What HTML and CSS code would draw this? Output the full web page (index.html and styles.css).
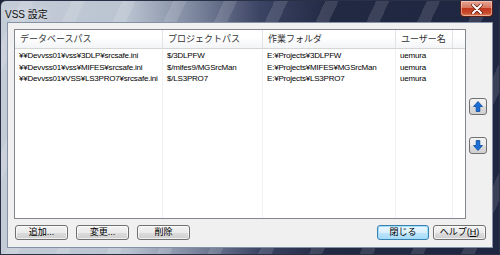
FILE: index.html
```html
<!DOCTYPE html>
<html lang="ja">
<head>
  <meta charset="UTF-8">
  <title>VSS 設定</title>
  <link rel="stylesheet" href="styles.css">
</head>
<body>
  <div class="window">
    <div class="titlebar">
      <span class="title">VSS 設定</span>
      <button class="close-btn" title="閉じる">
        <svg width="12" height="10" viewBox="0 0 12 10">
          <path d="M2 1 L10 9 M10 1 L2 9" stroke="#5a1a10" stroke-width="3.4" stroke-linecap="round"/>
          <path d="M2 1 L10 9 M10 1 L2 9" stroke="#fff" stroke-width="2" stroke-linecap="round"/>
        </svg>
      </button>
    </div>

    <div class="client">
      <div class="main">
        <div class="list">
          <div class="col c1">
            <div class="hd">データベースパス</div>
            <div class="cell">¥¥Devvss01¥vss¥3DLP¥srcsafe.ini</div>
            <div class="cell">¥¥Devvss01¥vss¥MIFES¥srcsafe.ini</div>
            <div class="cell">¥¥Devvss01¥VSS¥LS3PRO7¥srcsafe.ini</div>
          </div>
          <div class="col c2">
            <div class="hd">プロジェクトパス</div>
            <div class="cell">$/3DLPFW</div>
            <div class="cell">$/mifes9/MGSrcMan</div>
            <div class="cell">$/LS3PRO7</div>
          </div>
          <div class="col c3">
            <div class="hd">作業フォルダ</div>
            <div class="cell">E:¥Projects¥3DLPFW</div>
            <div class="cell">E:¥Projects¥MIFES¥MGSrcMan</div>
            <div class="cell">E:¥Projects¥LS3PRO7</div>
          </div>
          <div class="col c4">
            <div class="hd">ユーザー名</div>
            <div class="cell">uemura</div>
            <div class="cell">uemura</div>
            <div class="cell">uemura</div>
          </div>
          <div class="col c5">
            <div class="hd">&nbsp;</div>
          </div>
        </div>

        <div class="side">
          <button class="arrow-btn up" title="上へ">
            <svg width="10" height="11" viewBox="0 0 10 11">
              <path d="M5 0.5 L9.5 5.5 L6.8 5.5 L6.8 10.5 L3.2 10.5 L3.2 5.5 L0.5 5.5 Z" fill="#1b6fd6" stroke="#0d4a9e" stroke-width="0.8"/>
            </svg>
          </button>
          <button class="arrow-btn down" title="下へ">
            <svg width="10" height="11" viewBox="0 0 10 11">
              <path d="M5 10.5 L9.5 5.5 L6.8 5.5 L6.8 0.5 L3.2 0.5 L3.2 5.5 L0.5 5.5 Z" fill="#1b6fd6" stroke="#0d4a9e" stroke-width="0.8"/>
            </svg>
          </button>
        </div>
      </div>

      <div class="bottom">
        <div class="group">
          <button class="btn">追加...</button>
          <button class="btn">変更...</button>
          <button class="btn">削除</button>
        </div>
        <div class="group right">
          <button class="btn default">閉じる</button>
          <button class="btn">ヘルプ(<u>H</u>)</button>
        </div>
      </div>
    </div>
  </div>
</body>
</html>
```

FILE: styles.css
```css
body { margin: 0; background: #1c2238; font-family: "Liberation Sans", "Noto Sans CJK JP", sans-serif; }

.window {
  width: 500px; height: 255px; box-sizing: border-box;
  border: 1px solid #2a3045; border-radius: 6px 6px 0 0;
  background:
    repeating-linear-gradient(115deg, rgba(255,255,255,0) 0 18px, rgba(255,255,255,0.12) 18px 30px, rgba(255,255,255,0) 30px 46px),
    linear-gradient(90deg, #c4ccd7 0, #bac4d1 25%, #808aa1 38%, #3c4464 52%, #222943 66%, #1f2641 100%);
  display: flex; flex-direction: column;
}

.titlebar { height: 21px; display: flex; align-items: flex-start; justify-content: space-between; padding: 0 6px 0 4px; }
.title { font-size: 10px; color: #111; margin-top: 5px; text-shadow: 0 0 6px rgba(255,255,255,0.8); }

.close-btn {
  width: 33px; height: 16px; margin-top: 0; padding: 0;
  border: 1px solid #5b2016; border-top: none; border-radius: 0 0 4px 4px;
  background: linear-gradient(#e7a696 0, #d6775f 45%, #c1381e 50%, #c84a2c 80%, #de8a5e 100%);
  box-shadow: inset 0 0 0 1px rgba(255,220,210,0.5);
  display: flex; align-items: center; justify-content: center;
}

.client {
  flex: 1; margin: 0 6px 6px; background: #f0f0f0;
  border: 1px solid #8592a6; box-sizing: border-box;
  display: flex; flex-direction: column;
}

.main { display: flex; padding: 6px 0 0 6px; height: 196px; box-sizing: border-box; }

.list {
  width: 452px; height: 190px; box-sizing: border-box;
  border: 1px solid #828790; background: #fff;
  display: flex; overflow: hidden;
  font-size: 8px; color: #000;
}
.col { border-right: 1px solid #f0f0f0; box-sizing: border-box; }
.c1 { width: 148px; }
.c2 { width: 100px; }
.c3 { width: 133px; }
.c4 { width: 57px; }
.c5 { flex: 1; border-right: none; }

.hd {
  height: 18px; line-height: 18px; padding-left: 5px; white-space: nowrap;
  font-size: 9px; color: #333;
  background: linear-gradient(#ffffff 0, #ffffff 40%, #f3f4f6 100%);
  border-bottom: 1px solid #d5d5d5; border-right: 1px solid #e3e4e6;
  margin-right: -1px; margin-bottom: 1px;
}
.cell { height: 11.6px; line-height: 11.6px; padding-left: 4px; white-space: nowrap; overflow: hidden; letter-spacing: -0.2px; }

.side { display: flex; flex-direction: column; padding: 69px 0 0 3px; gap: 22px; }
.arrow-btn {
  width: 18px; height: 17px; padding: 0; box-sizing: border-box;
  border: 1px solid #707070; border-radius: 3px;
  background: linear-gradient(#f2f2f2 0, #ebebeb 50%, #dddddd 50%, #cfcfcf 100%);
  display: flex; align-items: center; justify-content: center;
}

.bottom { display: flex; justify-content: space-between; padding: 0 6px 0 7px; margin-top: 6px; }
.group { display: flex; gap: 8px; }
.group.right { gap: 4px; }

.btn {
  width: 53px; height: 15px; padding: 0; box-sizing: border-box;
  border: 1px solid #707070; border-radius: 3px;
  background: linear-gradient(#f2f2f2 0, #ebebeb 50%, #dddddd 50%, #cfcfcf 100%);
  box-shadow: inset 0 0 0 1px rgba(255,255,255,0.7);
  font-family: "Liberation Sans", "Noto Sans CJK JP", sans-serif;
  font-size: 9px; line-height: 13px; color: #000;
}
.btn u { text-decoration: underline; }
.btn.default {
  width: 52px; border-color: #3c7fb1;
  background: linear-gradient(#eaf6fd 0, #d9f0fc 50%, #bee6fd 50%, #a7d9f5 100%);
  box-shadow: inset 0 0 0 1px #9fe0ff;
}
```
